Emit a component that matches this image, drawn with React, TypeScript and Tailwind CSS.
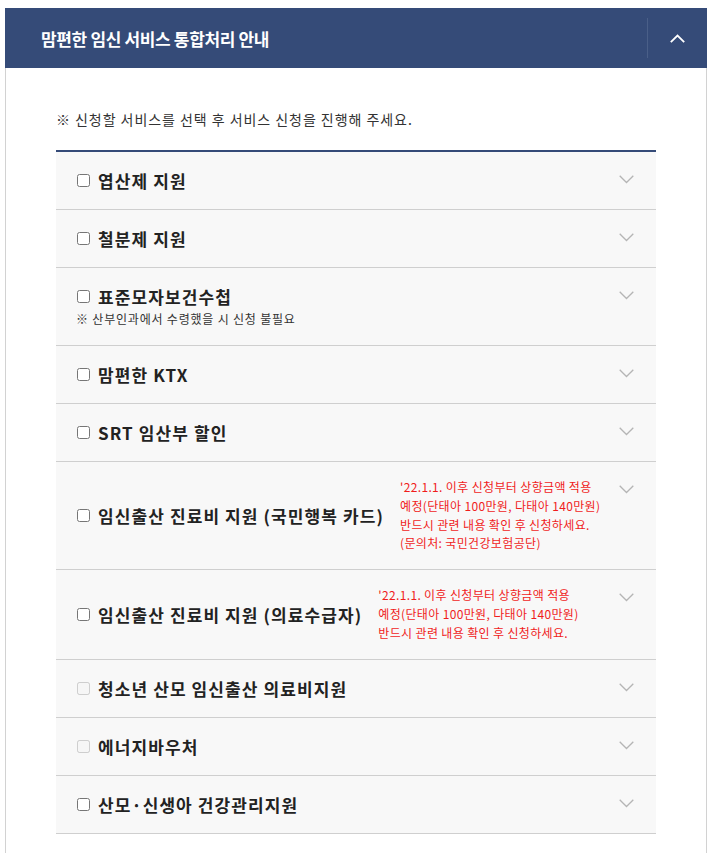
import React, { useState } from "react";

interface Service {
  id: number;
  name: string;
  sub?: string;
  notice?: string[];
  disabled?: boolean;
}

const services: Service[] = [
  { id: 1, name: "엽산제 지원" },
  { id: 2, name: "철분제 지원" },
  { id: 3, name: "표준모자보건수첩", sub: "※ 산부인과에서 수령했을 시 신청 불필요" },
  { id: 4, name: "맘편한 KTX" },
  { id: 5, name: "SRT 임산부 할인" },
  {
    id: 6,
    name: "임신출산 진료비 지원 (국민행복 카드)",
    notice: [
      "'22.1.1. 이후 신청부터 상향금액 적용",
      "예정(단태아 100만원, 다태아 140만원)",
      "반드시 관련 내용 확인 후 신청하세요.",
      "(문의처: 국민건강보험공단)",
    ],
  },
  {
    id: 7,
    name: "임신출산 진료비 지원 (의료수급자)",
    notice: [
      "'22.1.1. 이후 신청부터 상향금액 적용",
      "예정(단태아 100만원, 다태아 140만원)",
      "반드시 관련 내용 확인 후 신청하세요.",
    ],
  },
  { id: 8, name: "청소년 산모 임신출산 의료비지원", disabled: true },
  { id: 9, name: "에너지바우처", disabled: true },
  { id: 10, name: "산모·신생아 건강관리지원" },
];

function ChevronDown() {
  return (
    <svg width="15" height="9" viewBox="0 0 15 9" fill="none">
      <path d="M0.7 0.7 L7.5 7.5 L14.3 0.7" stroke="#b5b5b5" strokeWidth="1.3" />
    </svg>
  );
}

function ChevronUp() {
  return (
    <svg width="15" height="9" viewBox="0 0 15 9" fill="none">
      <path d="M0.8 8.2 L7.5 1.5 L14.2 8.2" stroke="#ffffff" strokeWidth="1.8" />
    </svg>
  );
}

export default function App() {
  const [checked, setChecked] = useState<number[]>([]);
  const [open, setOpen] = useState(true);

  const toggle = (id: number) => {
    setChecked((prev) => (prev.includes(id) ? prev.filter((v) => v !== id) : [...prev, id]));
  };

  return (
    <div
      className="pt-2 pl-[5px] w-[707px]"
      style={{ fontFamily: '"Noto Sans CJK KR", "Noto Sans", sans-serif' }}
    >
      {/* 헤더 */}
      <div className="flex h-[60px] bg-[#354b78] items-center">
        <h2 className="flex-1 pl-9 text-[17px] font-bold tracking-[-0.35px] text-white leading-none">
          맘편한 임신 서비스 통합처리 안내
        </h2>
        <button
          onClick={() => setOpen(!open)}
          className="w-[60px] h-[40px] border-l border-[#4a5f88] flex items-center justify-center"
        >
          <ChevronUp />
        </button>
      </div>

      {/* 본문 */}
      {open && (
        <div className="bg-white border-x border-[#d2d2d2] px-[50px] pt-[41px] pb-10">
          <p className="text-[14px] leading-[20px] text-[#333] tracking-[0.95px]">
            ※ 신청할 서비스를 선택 후 서비스 신청을 진행해 주세요.
          </p>
          <ul className="mt-[21px] border-t-2 border-[#354b78]">
            {services.map((s) => (
              <li
                key={s.id}
                className="relative bg-[#f8f8f8] border-b border-[#cfcfcf] py-4 pl-[21px] pr-14"
              >
                <div className="flex items-center">
                  <label className="flex items-center cursor-pointer">
                    <input
                      type="checkbox"
                      disabled={s.disabled}
                      checked={checked.includes(s.id)}
                      onChange={() => toggle(s.id)}
                      className="w-[13px] h-[13px] m-0"
                    />
                    <span className="ml-2 text-[17px] font-bold leading-[25px] text-[#222] tracking-[1.1px] whitespace-nowrap">
                      {s.name}
                    </span>
                  </label>
                  {s.notice && (
                    <div className="ml-4 text-[12px] leading-[18.8px] text-[#f01c1c] tracking-[0.35px] whitespace-nowrap">
                      {s.notice.map((line) => (
                        <p key={line}>{line}</p>
                      ))}
                    </div>
                  )}
                </div>
                {s.sub && (
                  <p className="text-[12px] leading-[20px] text-[#333] -ml-[1px] tracking-[0.8px]">{s.sub}</p>
                )}
                <span className="absolute right-[22px] top-[23px]">
                  <ChevronDown />
                </span>
              </li>
            ))}
          </ul>
        </div>
      )}
    </div>
  );
}
